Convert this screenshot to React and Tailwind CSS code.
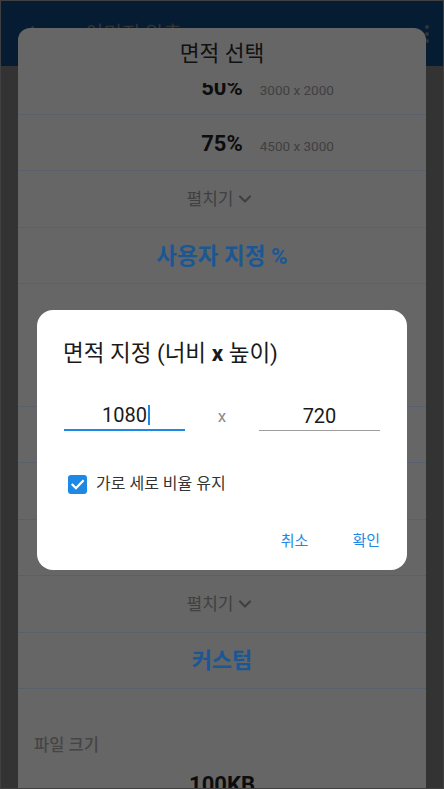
import React from "react";

const FONT = { fontFamily: 'Roboto, "Noto Sans CJK KR", sans-serif' };

function Row({ children, className = "" }) {
  return (
    <div className={"h-[56.5px] shrink-0 border-b border-[#58616b] flex items-center justify-center " + className}>
      {children}
    </div>
  );
}

function PercentRow({ pct, dims }) {
  return (
    <Row className="pt-[3px]">
      <span className="relative text-[22px] leading-[28px] font-bold text-[#0d0d0d]">
        {pct}
        <span className="absolute left-full top-[2px] ml-[17px] whitespace-nowrap text-[13.5px] leading-[28px] font-normal text-[#404040]">
          {dims}
        </span>
      </span>
    </Row>
  );
}

function Expand() {
  return (
    <Row>
      <span className="flex items-center gap-[2px] -ml-[2px] text-[17px] leading-[24px] text-[#404040]">
        펼치기
        <svg width="20" height="20" viewBox="0 0 24 24" fill="none" stroke="#404040" strokeWidth="2.6" strokeLinecap="round" strokeLinejoin="round">
          <path d="m6 9 6 6 6-6" />
        </svg>
      </span>
    </Row>
  );
}

function SectionLabel({ children }) {
  return (
    <div className="h-[66px] shrink-0 pt-[47px] pl-[16px]">
      <div className="text-[16.5px] leading-[20px] font-medium text-[#454545]">{children}</div>
    </div>
  );
}

export default function App() {
  return (
    <div style={FONT} className="relative w-[444px] h-[789px] overflow-hidden bg-[#333333] border border-[#404040]">
      {/* background app bar */}
      <div className="h-[65px] bg-[#061c33] flex items-center pl-[20px] pr-[14px]">
        <svg width="24" height="24" viewBox="0 0 24 24" fill="none" stroke="#333" strokeWidth="2.2" strokeLinecap="round" strokeLinejoin="round">
          <path d="M19 12H5" />
          <path d="m12 19-7-7 7-7" />
        </svg>
        <span className="ml-[40px] text-[20px] text-[#333]">이미지 압축</span>
        <span className="ml-auto flex flex-col gap-[3px]">
          <span className="w-[4px] h-[4px] rounded-full bg-[#333]" />
          <span className="w-[4px] h-[4px] rounded-full bg-[#333]" />
          <span className="w-[4px] h-[4px] rounded-full bg-[#333]" />
        </span>
      </div>

      {/* bottom sheet (dimmed) */}
      <div className="absolute left-[17px] top-[27px] w-[408px] bottom-0 bg-[#666666] rounded-t-[12px] overflow-hidden flex flex-col">
        <div className="h-[55px] shrink-0 flex items-center justify-center pb-[3px]">
          <span className="text-[21.5px] leading-[28px] text-[#111]">면적 선택</span>
        </div>
        <div className="flex-1 overflow-hidden">
          <div className="-mt-[24.7px] flex flex-col">
            <PercentRow pct="50%" dims="3000 x 2000" />
            <PercentRow pct="75%" dims="4500 x 3000" />
            <Expand />
            <Row>
              <span className="text-[22.5px] leading-[28px] font-bold text-[#1b5793]">사용자 지정 %</span>
            </Row>
            <div className="h-[66px] shrink-0" />
            <Row />
            <Row />
            <Row />
            <Row />
            <Expand />
            <Row>
              <span className="text-[22px] leading-[28px] font-bold text-[#1b5793]">커스텀</span>
            </Row>
            <SectionLabel>파일 크기</SectionLabel>
            <Row className="pt-[3px]">
              <span className="text-[22px] leading-[28px] font-bold text-[#0d0d0d]">100KB</span>
            </Row>
          </div>
        </div>
      </div>

      {/* dialog */}
      <div className="absolute left-[36px] top-[309px] w-[370px] h-[260px] bg-white rounded-[16px] pt-[29px] px-[27px]">
        <div className="text-[22.5px] leading-[28px] text-[#1a1a1a] -ml-[1px]">
          면적 지정 (너비 <span className="font-bold">x</span> 높이)
        </div>
        <div className="mt-[32px] flex">
          <div className="w-[121px] h-[32px] border-b-2 border-[#1e88e5] flex items-center justify-center pt-[2px]">
            <span className="relative text-[20px] leading-[26px] text-[#1a1a1a]">
              1080
              <span className="absolute left-full top-[3px] ml-[1px] w-[2px] h-[20px] bg-[#1e88e5]" />
            </span>
          </div>
          <div className="flex-1 flex items-center justify-center pt-[2px] text-[17px] leading-[26px] text-[#8c8c8c]">x</div>
          <div className="w-[121px] h-[32px] border-b border-[#9e9e9e] flex items-center justify-center pt-[2px]">
            <span className="text-[20px] leading-[26px] text-[#1a1a1a]">720</span>
          </div>
        </div>
        <div className="mt-[43px] h-[20px] flex items-center">
          <span className="ml-[4px] w-[19px] h-[19px] rounded-[3px] bg-[#1e88e5] flex items-center justify-center">
            <svg width="15" height="15" viewBox="0 0 24 24" fill="none" stroke="#fff" strokeWidth="3.6" strokeLinecap="square" strokeLinejoin="miter">
              <path d="M4 12.5 9.5 18 20.5 6.5" />
            </svg>
          </span>
          <span className="ml-[9px] text-[16px] leading-[20px] text-[#333]">가로 세로 비율 유지</span>
        </div>
        <div className="mt-[35px] flex justify-end gap-[44px] text-[15px] leading-[24px] text-[#1e88e5]">
          <span>취소</span>
          <span>확인</span>
        </div>
      </div>
    </div>
  );
}
